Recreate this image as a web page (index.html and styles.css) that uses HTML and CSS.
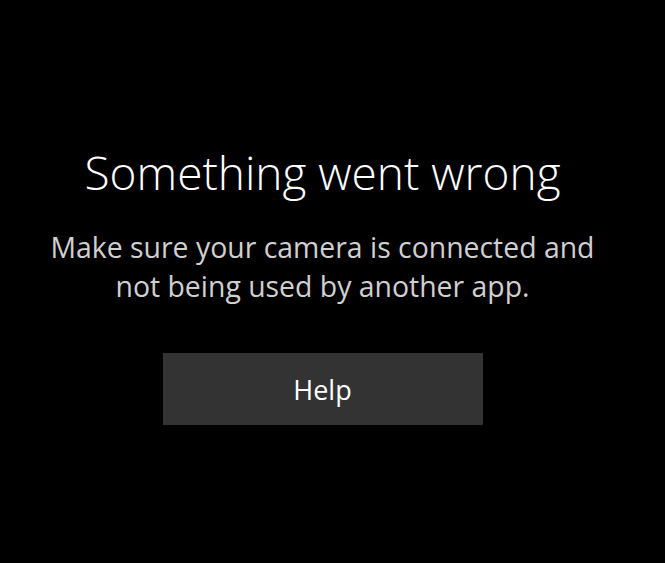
FILE: index.html
```html
<!DOCTYPE html>
<html>
<head>
<meta charset="utf-8">
<link rel="stylesheet" href="styles.css">
</head>
<body>
<main class="page">
  <h1 class="title">Something went wrong</h1>
  <p class="message">Make sure your camera is connected and<br>not being used by another app.</p>
  <button class="help">Help</button>
</main>
</body>
</html>
```
FILE: styles.css
```css
html, body {
  margin: 0;
  padding: 0;
  background: #000;
  height: 100%;
}
.page {
  height: 563px;
  display: flex;
  flex-direction: column;
  align-items: center;
  padding-top: 141px;
  padding-right: 20px;
  box-sizing: border-box;
  font-family: "Open Sans", "Noto Sans", sans-serif;
}
.title {
  margin: 0;
  font-weight: 300;
  font-size: 46px;
  line-height: 62px;
  color: #fff;
}
.message {
  margin: 25px 0 0;
  font-weight: 400;
  font-size: 28.4px;
  line-height: 39px;
  color: #d0d0d0;
  text-align: center;
}
.help {
  margin-top: 47px;
  width: 320px;
  height: 72px;
  border: 0;
  background: #333;
  color: #fff;
  font-family: "Open Sans", "Noto Sans", sans-serif;
  font-size: 27px;
  font-weight: 400;
  padding: 0;
}
```
